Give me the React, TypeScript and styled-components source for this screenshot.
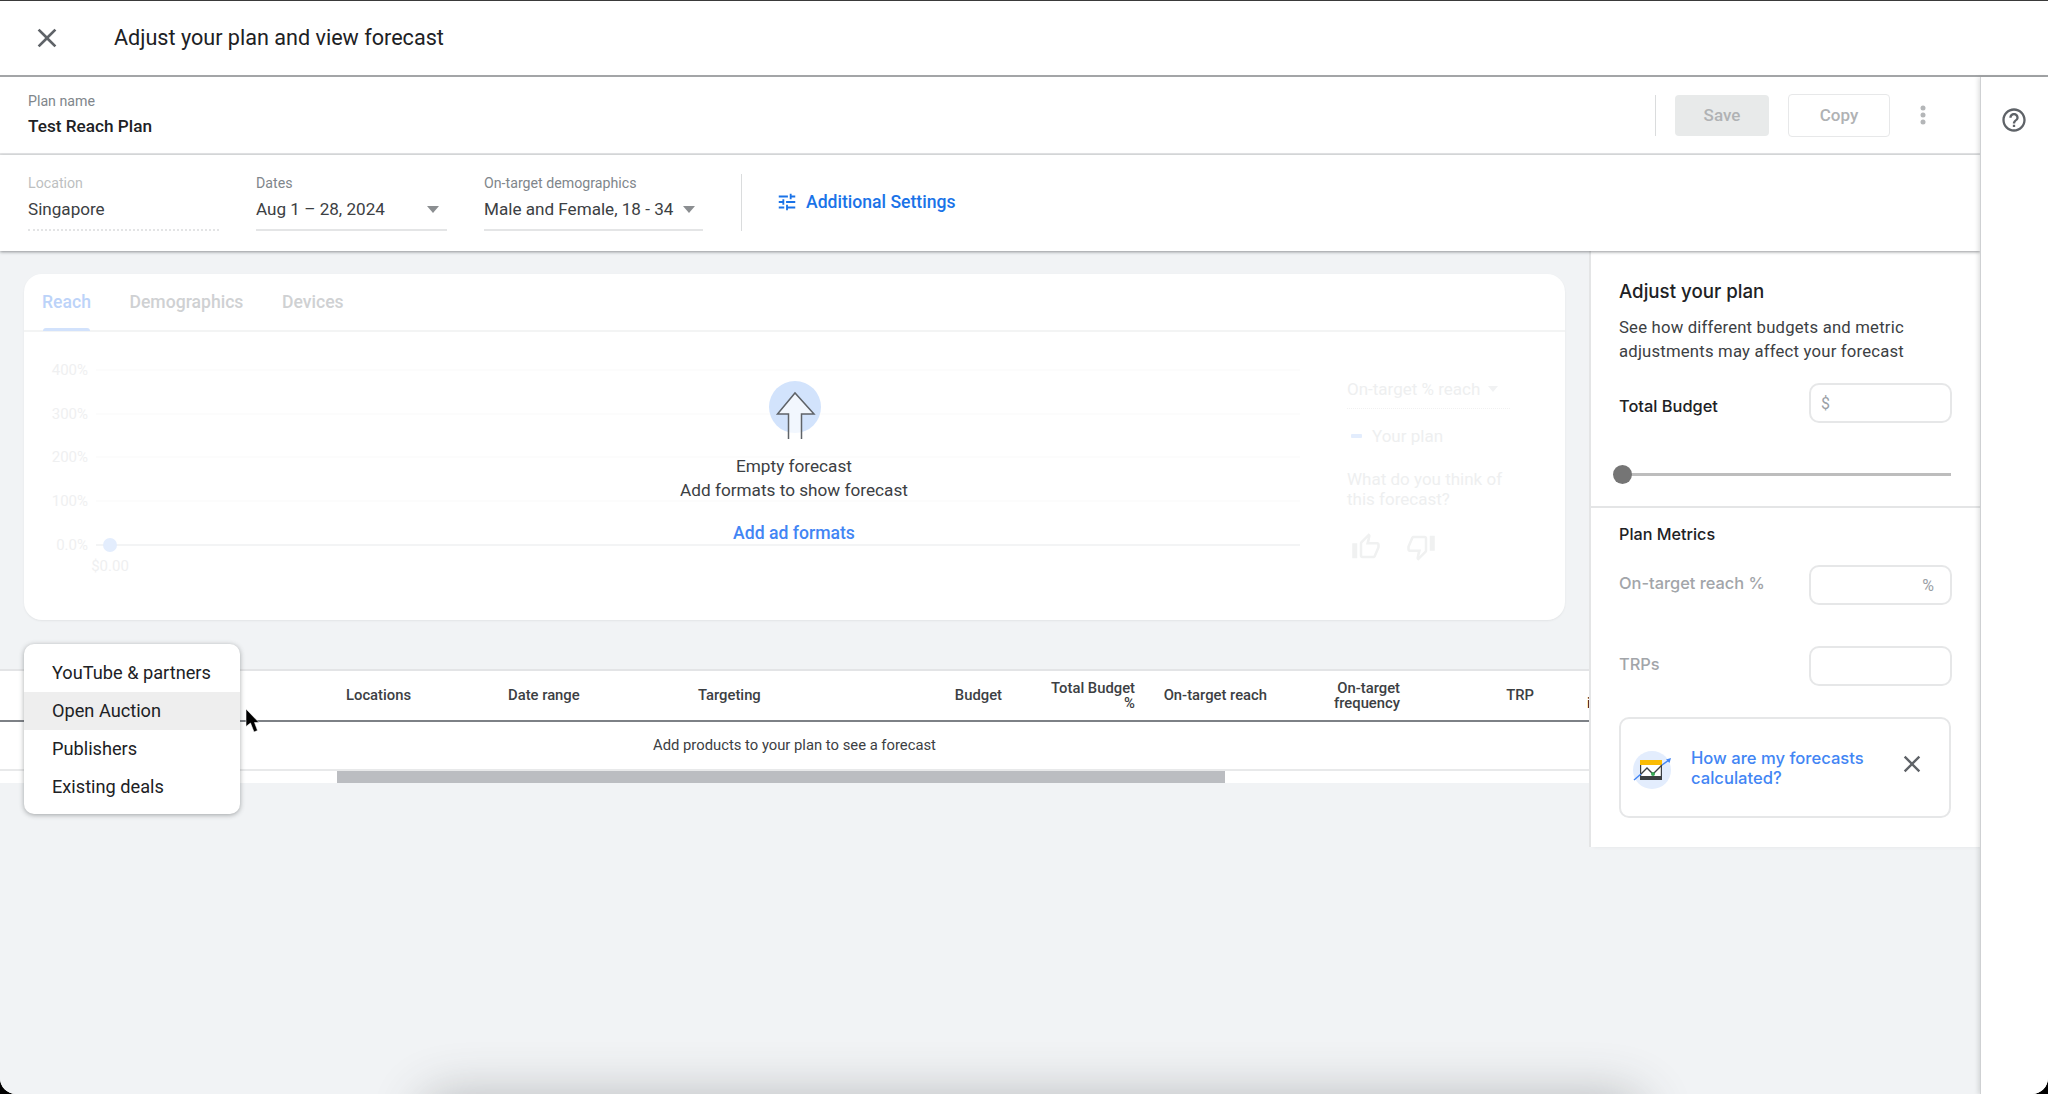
import React from 'react';
import styled, { createGlobalStyle } from 'styled-components';
import { MdOutlineThumbUp, MdOutlineThumbDown } from 'react-icons/md';

const COLORS = {
  blue: '#1a73e8',
  softBlue: '#4285f4',
  text: '#3c4043',
  label: '#80868b',
  line: '#e4e5e6',
  page: '#f1f3f5',
  ghost: '#eff0f1',
};

const GlobalStyle = createGlobalStyle`
  html, body {
    margin: 0;
    background: #000;
  }
  body {
    font-family: Roboto, "Liberation Sans", sans-serif;
    color: ${COLORS.text};
  }
  * {
    box-sizing: border-box;
  }
`;

const Page = styled.div`
  position: relative;
  display: flex;
  flex-direction: column;
  width: 2048px;
  height: 1094px;
  overflow: hidden;
  background: #fff;
  border-top: 1px solid #3a3a3a;
  border-radius: 0 0 16px 16px;
`;

const Header = styled.header`
  display: flex;
  align-items: center;
  flex: none;
  height: 76px;
  padding-left: 31px;
  border-bottom: 2px solid #a3a5a7;
`;

const CloseButton = styled.svg`
  width: 32px;
  height: 32px;
  fill: #5f6368;
  margin-right: 51px;
`;

const Title = styled.h1`
  margin: 0 0 1px;
  font-size: 21.6px;
  font-weight: 400;
  color: #202124;
`;

const Body = styled.div`
  display: flex;
  flex: 1;
  min-height: 0;
`;

const Left = styled.div`
  display: flex;
  flex-direction: column;
  width: 1980px;
  flex: none;
`;

const PlanBar = styled.div`
  display: flex;
  align-items: center;
  justify-content: space-between;
  flex: none;
  height: 78px;
  padding: 0 54px 0 28px;
  border-bottom: 2px solid ${COLORS.line};
`;

const SmallLabel = styled.div<{ $muted?: boolean }>`
  font-size: 14.2px;
  line-height: 18px;
  color: ${({ $muted }) => ($muted ? '#bdbfc1' : COLORS.label)};
`;

const PlanName = styled.div`
  margin: 5px 0 1px;
  font-size: 17.2px;
  line-height: 22px;
  font-weight: 500;
  color: #202124;
`;

const PlanActions = styled.div`
  display: flex;
  align-items: center;
`;

const ActionDivider = styled.div`
  width: 1px;
  height: 41px;
  margin-right: 19px;
  background: #dadcdd;
`;

const ActionButton = styled.button<{ $filled?: boolean }>`
  width: ${({ $filled }) => ($filled ? '94px' : '102px')};
  height: ${({ $filled }) => ($filled ? '41px' : '43px')};
  margin-right: ${({ $filled }) => ($filled ? '19px' : '20px')};
  padding: 0;
  border: ${({ $filled }) => ($filled ? 'none' : '1px solid #e7e8e9')};
  border-radius: 4px;
  background: ${({ $filled }) => ($filled ? '#e8eaea' : '#fff')};
  font: 500 17px Roboto, sans-serif;
  color: #b0b2b4;
`;

const DotsIcon = styled.svg`
  width: 6px;
  height: 20px;
  margin-left: 10px;
  fill: #b4b6b8;
`;

const FilterBar = styled.div`
  position: relative;
  z-index: 2;
  display: flex;
  flex: none;
  height: 96px;
  padding: 19px 0 0 28px;
  background: #fff;
  box-shadow: 0 1px 3px rgba(60, 64, 67, 0.55);
`;

const Field = styled.div<{ $width: number; $dotted?: boolean }>`
  display: flex;
  flex-direction: column;
  width: ${({ $width }) => $width}px;
  height: 57px;
  margin-right: 37px;
  border-bottom: ${({ $dotted }) => ($dotted ? '2px dotted #e3e4e5' : '2px solid #e4e5e6')};
`;

const FieldValue = styled.div`
  display: flex;
  align-items: center;
  justify-content: space-between;
  margin-top: 6px;
  padding-right: 8px;
  font-size: 17.1px;
  line-height: 22px;
  white-space: nowrap;
`;

const Caret = styled.span`
  width: 0;
  height: 0;
  border-left: 6px solid transparent;
  border-right: 6px solid transparent;
  border-top: 7px solid #8b8e91;
`;

const FilterDivider = styled.div`
  width: 1px;
  height: 57px;
  margin-left: 1px;
  margin-right: 34px;
  background: #dadcdd;
`;

const SettingsLink = styled.a`
  display: flex;
  align-items: center;
  gap: 8px;
  height: 56px;
  font-size: 17.6px;
  font-weight: 500;
  color: ${COLORS.blue};
`;

const SettingsIcon = styled.svg`
  width: 22px;
  height: 22px;
  fill: ${COLORS.blue};
`;

const Workspace = styled.div`
  display: flex;
  align-items: flex-start;
  flex: 1;
  min-height: 0;
  background: ${COLORS.page};
`;

const Content = styled.div`
  display: flex;
  flex-direction: column;
  width: 1589px;
  flex: none;
  padding-top: 23px;
`;

const ForecastCard = styled.section`
  display: flex;
  flex-direction: column;
  width: 1541px;
  height: 346px;
  margin-left: 24px;
  border-radius: 18px;
  background: #fff;
  box-shadow: 0 1px 2px rgba(60, 64, 67, 0.08);
`;

const Tabs = styled.div`
  display: flex;
  gap: 38.5px;
  flex: none;
  height: 58px;
  padding: 14px 0 0 18px;
  border-bottom: 2px solid #f3f4f4;
`;

const Tab = styled.div<{ $active?: boolean }>`
  position: relative;
  height: 43px;
  line-height: 28px;
  font-size: 17.6px;
  font-weight: 500;
  color: ${({ $active }) => ($active ? '#bcd3f9' : '#cfd1d3')};
  ${({ $active }) => $active && `
    &::after {
      content: '';
      position: absolute;
      left: 1px;
      right: 1px;
      bottom: 0;
      height: 3px;
      border-radius: 3px 3px 0 0;
      background: #d2e2fc;
    }
  `}
`;

const ForecastBody = styled.div`
  position: relative;
  display: flex;
  flex: 1;
`;

const ChartSvg = styled.svg`
  width: 1323px;
  height: 288px;
  flex: none;
  font-family: Roboto, sans-serif;
  font-size: 15px;
`;

const EmptyState = styled.div`
  position: absolute;
  left: 620px;
  top: 49px;
  width: 300px;
  display: flex;
  flex-direction: column;
  align-items: center;
`;

const UploadIcon = styled.svg`
  width: 56px;
  height: 60px;
  margin: 0 0 14px 3px;
`;

const EmptyText = styled.div`
  font-size: 17.2px;
  line-height: 23.5px;
  white-space: nowrap;
`;

const AddFormats = styled.a`
  margin-top: 21px;
  font-size: 17.6px;
  font-weight: 500;
  color: ${COLORS.softBlue};
`;

const Legend = styled.aside`
  display: flex;
  flex-direction: column;
  padding-top: 47px;
  color: #eeeff0;
  font-size: 17px;
`;

const LegendSelect = styled.div`
  display: flex;
  align-items: center;
  gap: 8px;
  width: 163px;
  height: 30px;
  padding-bottom: 9px;
  border-bottom: 1px dotted #f1f1f1;
  white-space: nowrap;
`;

const LegendCaret = styled.span`
  width: 0;
  height: 0;
  border-left: 5px solid transparent;
  border-right: 5px solid transparent;
  border-top: 6px solid #f1f2f3;
`;

const LegendPlan = styled.div`
  display: flex;
  align-items: center;
  gap: 10px;
  margin: 17px 0 0 4px;
`;

const LegendDash = styled.span`
  width: 11px;
  height: 4px;
  border-radius: 1px;
  background: #e3edfd;
`;

const Question = styled.div`
  margin-top: 24px;
  line-height: 19.5px;
`;

const Thumbs = styled.div`
  display: flex;
  gap: 25px;
  margin: 23px 0 0 4px;
  font-size: 30px;
  color: #f0f1f1;
`;

const TableBlock = styled.div`
  display: flex;
  flex-direction: column;
  margin-top: 49px;
  border-top: 2px solid #e3e4e6;
  background: #fff;
`;

const HeadRow = styled.div`
  display: grid;
  grid-template-columns: 346px 162px 190px 204px 100px 133px 132px 133px 134px 1fr;
  align-items: center;
  height: 51px;
  border-bottom: 2px solid #7d8186;
  font-size: 14.8px;
  line-height: 15px;
  font-weight: 500;
  color: #3c4043;
`;

const HeadCell = styled.div<{ $right?: boolean }>`
  text-align: ${({ $right }) => ($right ? 'right' : 'left')};
`;

const ClippedCell = styled.div`
  padding: 15px 0 0 53px;
  overflow: hidden;
  color: #202124;
`;

const EmptyRow = styled.div`
  height: 49px;
  line-height: 47px;
  text-align: center;
  font-size: 14.8px;
  border-bottom: 2px solid #e8e9ea;
`;

const ScrollTrack = styled.div`
  display: flex;
  height: 12px;
  padding-left: 337px;
`;

const ScrollThumb = styled.div`
  width: 888px;
  height: 12px;
  background: #bbbdc1;
`;

const AdjustPanel = styled.aside`
  width: 391px;
  height: 596px;
  flex: none;
  background: #fff;
  border-left: 2px solid #e4e5e6;
  box-shadow: 3px 0 5px -2px rgba(60, 64, 67, 0.2);
`;

const AdjustTop = styled.div`
  height: 257px;
  padding: 29px 28px 0 28px;
  border-bottom: 2px solid #e4e5e6;
`;

const PanelTitle = styled.h2`
  margin: 0;
  font: 500 18.7px/24px Inter, Roboto, sans-serif;
  color: #202124;
`;

const PanelText = styled.p`
  margin: 12px 0 0;
  font-size: 16.7px;
  line-height: 24px;
  letter-spacing: 0.2px;
`;

const MetricRow = styled.div<{ $top?: number }>`
  display: flex;
  align-items: center;
  justify-content: space-between;
  height: 40px;
  margin-top: ${({ $top }) => $top || 0}px;
`;

const MetricLabel = styled.div<{ $muted?: boolean }>`
  margin-top: ${({ $muted }) => ($muted ? '-5px' : '6px')};
  font: 500 16.4px Inter, Roboto, sans-serif;
  color: ${({ $muted }) => ($muted ? '#a2a5a9' : '#202124')};
`;

const MetricInput = styled.div<{ $align?: string }>`
  display: flex;
  align-items: center;
  justify-content: ${({ $align }) => $align || 'flex-start'};
  width: 143px;
  height: 40px;
  padding: 0 16px 0 10px;
  border: 2px solid #e6e7e8;
  border-radius: 10px;
  font-size: 16px;
  color: #9aa0a6;
`;

const Slider = styled.div`
  position: relative;
  height: 3px;
  margin: 50px 0 0 -5px;
  width: 337px;
  background: #bdbdbd;
`;

const SliderThumb = styled.span`
  position: absolute;
  left: -1px;
  top: -8px;
  width: 19px;
  height: 19px;
  border-radius: 50%;
  background: #757575;
`;

const AdjustBottom = styled.div`
  padding: 16px 28px 0 28px;
`;

const SectionTitle = styled.h3`
  margin: 0 0 21px;
  font: 500 16.2px/20px Inter, Roboto, sans-serif;
  color: #202124;
`;

const MetricGap = styled.div`
  height: 41px;
`;

const InfoCard = styled.div`
  display: flex;
  align-items: center;
  width: 332px;
  height: 101px;
  margin-top: 31px;
  padding: 0 23px 0 12px;
  border: 2px solid #e6e7e8;
  border-radius: 10px;
`;

const InfoIcon = styled.svg`
  width: 40px;
  height: 40px;
  flex: none;
  margin: 6px 18px 0 0;
`;

const InfoLink = styled.a`
  flex: 1;
  font: 500 16.6px/20px Inter, Roboto, sans-serif;
  color: ${COLORS.softBlue};
  white-space: nowrap;
`;

const InfoClose = styled.svg`
  width: 28px;
  height: 28px;
  flex: none;
  margin-top: -8px;
  fill: #5f6368;
`;

const HelpRail = styled.div`
  position: relative;
  z-index: 3;
  flex: 1;
  padding: 29px 0 0 19px;
  background: #fff;
  border-left: 1px solid #cfd1d3;
  box-shadow: -2px 0 4px rgba(60, 64, 67, 0.15);
`;

const HelpIcon = styled.svg`
  width: 28px;
  height: 28px;
  fill: #5f6368;
`;

const ProductMenu = styled.ul`
  position: absolute;
  left: 24px;
  top: 643px;
  z-index: 5;
  width: 216px;
  height: 170px;
  margin: 0;
  padding: 10px 0;
  list-style: none;
  border-radius: 10px;
  background: #fff;
  box-shadow: 0 1px 5px rgba(60, 64, 67, 0.45);
`;

const ProductItem = styled.li<{ $active?: boolean }>`
  height: 38px;
  padding-left: 28px;
  line-height: 38px;
  font-size: 18.2px;
  color: #202124;
  background: ${({ $active }) => ($active ? '#eeeeee' : 'transparent')};
`;

const Cursor = styled.svg`
  position: absolute;
  left: 243px;
  top: 705px;
  z-index: 6;
  width: 18px;
  height: 28px;
`;

const BottomGlow = styled.div`
  position: absolute;
  left: 420px;
  top: 1093px;
  z-index: 1;
  width: 1225px;
  height: 60px;
  border-radius: 30px;
  box-shadow: 0 0 50px rgba(60, 64, 67, 0.3);
`;

const CLOSE = 'M19 6.41 17.59 5 12 10.59 6.41 5 5 6.41 10.59 12 5 17.59 6.41 19 12 13.41 17.59 19 19 17.59 13.41 12z';

const MENU_ITEMS = ['YouTube & partners', 'Open Auction', 'Publishers', 'Existing deals'];
const GRID_LINES = [
  { label: '400%', y: 38 },
  { label: '300%', y: 82 },
  { label: '200%', y: 125 },
  { label: '100%', y: 169 },
];

const App: React.FC = () => (
  <>
    <GlobalStyle />
    <Page>
      <Header>
        <CloseButton viewBox="0 0 24 24"><path d={CLOSE} /></CloseButton>
        <Title>Adjust your plan and view forecast</Title>
      </Header>
      <Body>
        <Left>
          <PlanBar>
            <div>
              <SmallLabel>Plan name</SmallLabel>
              <PlanName>Test Reach Plan</PlanName>
            </div>
            <PlanActions>
              <ActionDivider />
              <ActionButton $filled>Save</ActionButton>
              <ActionButton>Copy</ActionButton>
              <DotsIcon viewBox="0 0 6 20">
                <circle cx="3" cy="3" r="2.5" />
                <circle cx="3" cy="10" r="2.5" />
                <circle cx="3" cy="17" r="2.5" />
              </DotsIcon>
            </PlanActions>
          </PlanBar>
          <FilterBar>
            <Field $width={191} $dotted>
              <SmallLabel $muted>Location</SmallLabel>
              <FieldValue>Singapore</FieldValue>
            </Field>
            <Field $width={191}>
              <SmallLabel>Dates</SmallLabel>
              <FieldValue>Aug 1 – 28, 2024<Caret /></FieldValue>
            </Field>
            <Field $width={219}>
              <SmallLabel>On-target demographics</SmallLabel>
              <FieldValue>Male and Female, 18 - 34<Caret /></FieldValue>
            </Field>
            <FilterDivider />
            <SettingsLink>
              <SettingsIcon viewBox="0 0 24 24">
                <path d="M3 17v2h6v-2H3zM3 5v2h10V5H3zm10 16v-2h8v-2h-8v-2h-2v6h2zM7 9v2H3v2h4v2h2V9H7zm14 4v-2H11v2h10zm-6-4h2V7h4V5h-4V3h-2v6z" />
              </SettingsIcon>
              Additional Settings
            </SettingsLink>
          </FilterBar>
          <Workspace>
            <Content>
              <ForecastCard>
                <Tabs>
                  <Tab $active>Reach</Tab>
                  <Tab>Demographics</Tab>
                  <Tab>Devices</Tab>
                </Tabs>
                <ForecastBody>
                  <ChartSvg viewBox="0 0 1323 288">
                    {GRID_LINES.map(({ label, y }) => (
                      <g key={label}>
                        <line x1="72" x2="1276" y1={y} y2={y} stroke="#fbfbfb" strokeWidth="1.5" />
                        <text x="64" y={y + 5} textAnchor="end" fill="#eff0f1">{label}</text>
                      </g>
                    ))}
                    <line x1="72" x2="1276" y1="213" y2="213" stroke="#f3f4f5" strokeWidth="2" />
                    <text x="64" y="218" textAnchor="end" fill="#eff0f1">0.0%</text>
                    <circle cx="86" cy="213" r="7" fill="#e3edfd" />
                    <text x="86" y="239" textAnchor="middle" fill="#eff0f1">$0.00</text>
                  </ChartSvg>
                  <EmptyState>
                    <UploadIcon viewBox="0 0 56 60">
                      <circle cx="27" cy="26" r="26" fill="#d2e3fc" />
                      <path
                        d="M20.5 58V33H9.5L27 12l19 21H33.5v25"
                        fill="#ffffff"
                        fillOpacity="0.7"
                        stroke="#5f6368"
                        strokeWidth="1.5"
                      />
                    </UploadIcon>
                    <EmptyText>Empty forecast</EmptyText>
                    <EmptyText>Add formats to show forecast</EmptyText>
                    <AddFormats>Add ad formats</AddFormats>
                  </EmptyState>
                  <Legend>
                    <LegendSelect>On-target % reach<LegendCaret /></LegendSelect>
                    <LegendPlan><LegendDash />Your plan</LegendPlan>
                    <Question>What do you think of<br />this forecast?</Question>
                    <Thumbs>
                      <MdOutlineThumbUp />
                      <MdOutlineThumbDown />
                    </Thumbs>
                  </Legend>
                </ForecastBody>
              </ForecastCard>
              <TableBlock>
                <HeadRow>
                  <div />
                  <HeadCell>Locations</HeadCell>
                  <HeadCell>Date range</HeadCell>
                  <HeadCell>Targeting</HeadCell>
                  <HeadCell $right>Budget</HeadCell>
                  <HeadCell $right>Total Budget<br />%</HeadCell>
                  <HeadCell $right>On-target reach</HeadCell>
                  <HeadCell $right>On-target<br />frequency</HeadCell>
                  <HeadCell $right>TRP</HeadCell>
                  <ClippedCell>i</ClippedCell>
                </HeadRow>
                <EmptyRow>Add products to your plan to see a forecast</EmptyRow>
                <ScrollTrack><ScrollThumb /></ScrollTrack>
              </TableBlock>
            </Content>
            <AdjustPanel>
              <AdjustTop>
                <PanelTitle>Adjust your plan</PanelTitle>
                <PanelText>See how different budgets and metric<br />adjustments may affect your forecast</PanelText>
                <MetricRow $top={19}>
                  <MetricLabel>Total Budget</MetricLabel>
                  <MetricInput>$</MetricInput>
                </MetricRow>
                <Slider><SliderThumb /></Slider>
              </AdjustTop>
              <AdjustBottom>
                <SectionTitle>Plan Metrics</SectionTitle>
                <MetricRow>
                  <MetricLabel $muted>On-target reach %</MetricLabel>
                  <MetricInput $align="flex-end">%</MetricInput>
                </MetricRow>
                <MetricGap />
                <MetricRow>
                  <MetricLabel $muted>TRPs</MetricLabel>
                  <MetricInput />
                </MetricRow>
                <InfoCard>
                  <InfoIcon viewBox="0 0 40 40">
                    <circle cx="19" cy="19" r="19" fill="#e3edfd" />
                    <rect x="7" y="9" width="22" height="19" fill="#fff" />
                    <rect x="7" y="9" width="22" height="5" fill="#fbbc04" />
                    <path d="M7.6 14v11M28.4 14v11" stroke="#3c4043" strokeWidth="1.2" />
                    <rect x="7" y="25" width="22" height="4" fill="#3c4043" />
                    <path d="M1 29 L8 23" stroke="#4285f4" strokeWidth="1.5" />
                    <path d="M8 23 L14 17 L20 23 L29 14" fill="none" stroke="#3c4043" strokeWidth="1.4" />
                    <path d="M29 14 L36 9" stroke="#4285f4" strokeWidth="1.5" />
                    <path d="M38 7 L33 8.5 L36.5 12z" fill="#4285f4" />
                    <circle cx="20" cy="23" r="2" fill="#34a853" />
                  </InfoIcon>
                  <InfoLink>How are my forecasts<br />calculated?</InfoLink>
                  <InfoClose viewBox="0 0 24 24"><path d={CLOSE} /></InfoClose>
                </InfoCard>
              </AdjustBottom>
            </AdjustPanel>
          </Workspace>
        </Left>
        <HelpRail>
          <HelpIcon viewBox="0 0 24 24">
            <path d="M11 18h2v-2h-2v2zm1-16C6.48 2 2 6.48 2 12s4.48 10 10 10 10-4.48 10-10S17.52 2 12 2zm0 18c-4.41 0-8-3.59-8-8s3.59-8 8-8 8 3.59 8 8-3.59 8-8 8zm0-14c-2.21 0-4 1.79-4 4h2c0-1.1.9-2 2-2s2 .9 2 2c0 2-3 1.75-3 5h2c0-2.25 3-2.5 3-5 0-2.21-1.79-4-4-4z" />
          </HelpIcon>
        </HelpRail>
      </Body>
      <ProductMenu>
        {MENU_ITEMS.map((item) => (
          <ProductItem key={item} $active={item === 'Open Auction'}>{item}</ProductItem>
        ))}
      </ProductMenu>
      <Cursor viewBox="0 0 18 28">
        <path d="M3 3v17.5L7.5 17l3.5 9 3.5-1.5-3-8H16z" fill="#000" stroke="#fff" strokeOpacity="0.7" strokeWidth="0.8" />
      </Cursor>
      <BottomGlow />
    </Page>
  </>
);

export default App;
